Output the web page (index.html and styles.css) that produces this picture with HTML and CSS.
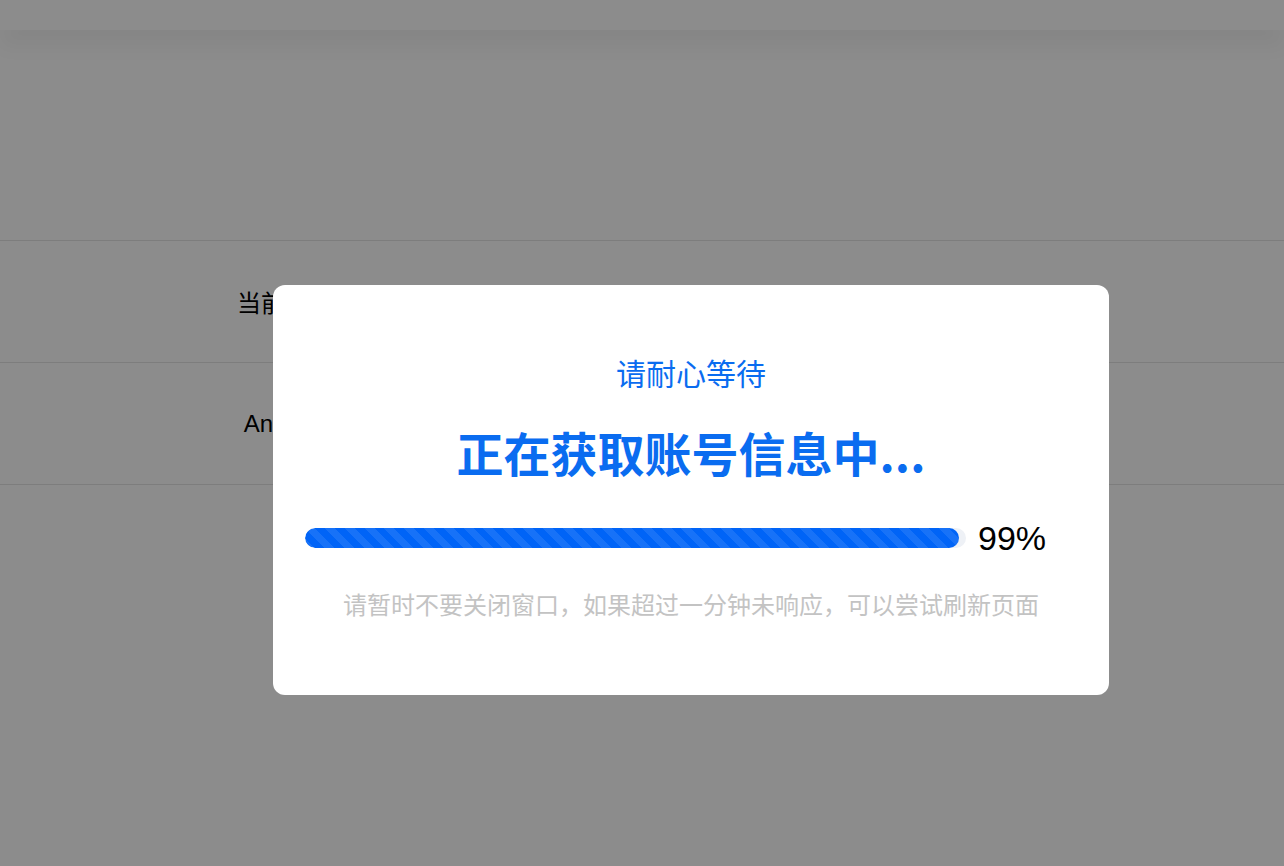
FILE: index.html
```html
<!DOCTYPE html>
<html lang="zh-CN">
<head>
	<meta charset="UTF-8">
	<title>正在获取账号信息</title>
	<link rel="stylesheet" href="styles.css">
</head>
<body>
	<div class="header"></div>

	<div class="list">
		<div class="row">
			<div class="label">当前账号</div>
			<div class="value"></div>
		</div>
		<div class="row">
			<div class="label">Android</div>
			<div class="value"></div>
		</div>
	</div>

	<div class="mask">
		<div class="dialog">
			<div class="tip">请耐心等待</div>
			<div class="title">正在获取账号信息中...</div>
			<div class="progress">
				<div class="track">
					<div class="bar" style="width: 99%;"></div>
				</div>
				<span class="percent">99%</span>
			</div>
			<div class="hint">请暂时不要关闭窗口，如果超过一分钟未响应，可以尝试刷新页面</div>
		</div>
	</div>
</body>
</html>
```

FILE: styles.css
```css
* {
	box-sizing: border-box;
}
body {
	margin: 0;
	background: #fff;
	font-family: "Liberation Sans", "Noto Sans CJK SC", sans-serif;
	color: #000;
}

.header {
	height: 30px;
	background: #fff;
	box-shadow: 0 18px 18px rgba(0,0,0,.045);
}

.list {
	margin-top: 210px;
	border-top: 1px solid #e4e4e4;
}
.row {
	display: grid;
	grid-template-columns: 570px 1fr;
	height: 122px;
	align-items: center;
	border-bottom: 1px solid #e4e4e4;
}
.row .label { text-align: center; font-size: 24px;}

.mask {
	position: fixed;
	top: 0; left: 0; right: 0; bottom: 0;
	background: rgba(0,0,0,.45);
}

.dialog {
	width: 836px;
	margin: 285px 0 0 273px;
	padding: 67px 32px 75px;
	background: #fff;
	border-radius: 12px;
	text-align: center;
	font-family: "Noto Sans CJK SC", sans-serif;
}

.tip { font-size: 30px; line-height: 40px; color: #0a6cf0;}
.title { margin-top: 30px; font-size: 47px; line-height: 60px; font-weight: bold; color: #0a6cf0;}

.progress {
	display: flex;
	align-items: center;
	height: 40px;
	margin-top: 36px;
}
.track {
	flex: 1;
	height: 20px;
	border-radius: 10px;
	background: #eef1f6;
	overflow: hidden;
}
.bar {
	height: 100%;
	border-radius: 10px;
	background-color: #0064f7;
	background-image: repeating-linear-gradient(45deg, rgba(255,255,255,.09) 0, rgba(255,255,255,.09) 7px, transparent 7px, transparent 14px);
}
.percent {
	width: 99px;
	margin-left: 12px;
	text-align: left;
	font-family: "Liberation Sans", sans-serif;
	font-size: 34px;
	line-height: 40px;
}

.hint { margin-top: 30px; font-size: 24px; line-height: 32px; color: #c3c3c3;}
```
